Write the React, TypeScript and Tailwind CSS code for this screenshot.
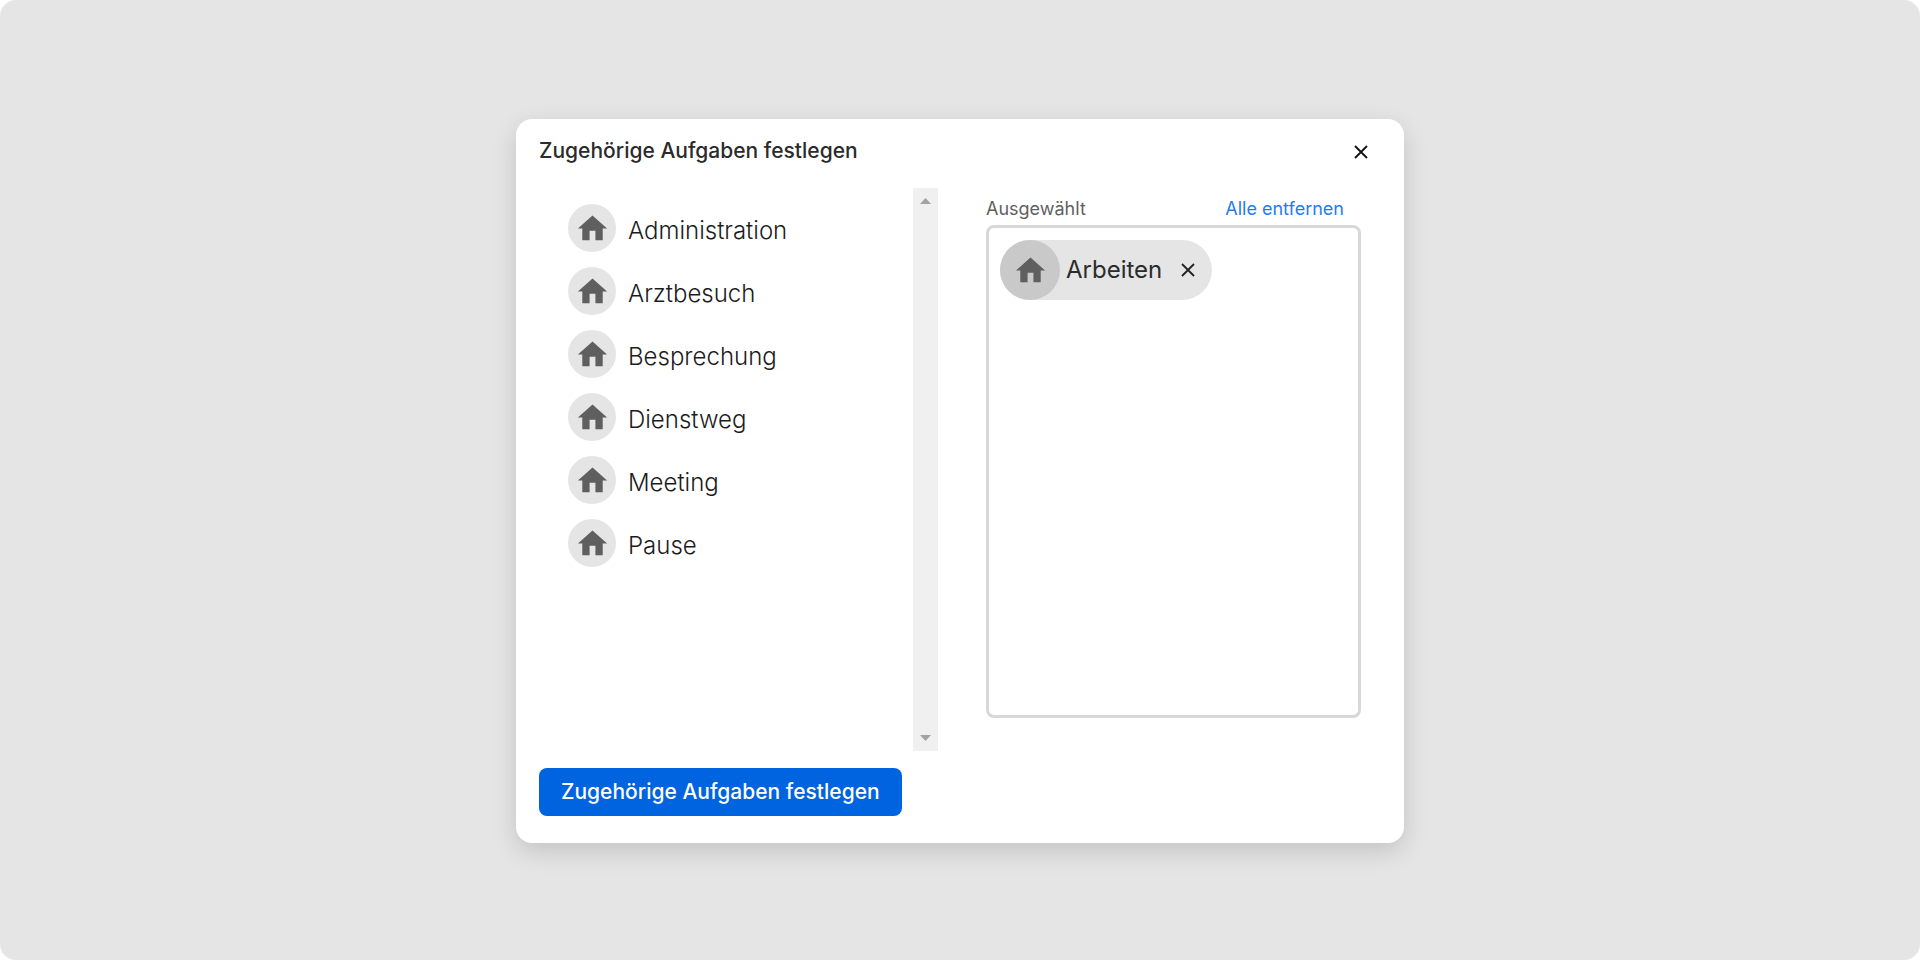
import { useState } from "react";

interface CloseIconProps {
  className?: string;
}

interface TaskItemProps {
  name: string;

  onSelect: (
    name: string
  ) => void;
}

interface TaskChipProps {
  name: string;

  onRemove: (
    name: string
  ) => void;
}

const tasks = [
  "Administration",
  "Arbeiten",
  "Arztbesuch",
  "Besprechung",
  "Dienstweg",
  "Meeting",
  "Pause",
];

const HomeIcon = () => (
  <svg
    viewBox="0 0 24 24"
    className="size-[35px] fill-[#5f5f5f]"
    aria-hidden="true"
  >
    <path d="M10 20v-6.500h4V20h5v-8h3L12 3 2 12h3v8z" />
  </svg>
);

const CloseIcon = ({ className }: CloseIconProps) => (
  <svg
    viewBox="0 0 14 14"
    className={className}
    fill="none"
    stroke="currentColor"
    strokeWidth="1.8"
    aria-hidden="true"
  >
    <path d="M1 1l12 12M13 1L1 13" />
  </svg>
);

const TaskItem = ({
  name,
  onSelect,
}: TaskItemProps) => (
  <li>
    <button
      type="button"
      onClick={() => onSelect(name)}
      className="flex items-center gap-3 text-left"
    >
      <span className="flex size-12 items-center justify-center rounded-full bg-[#e5e5e5]">
        <HomeIcon />
      </span>
      <span className="pt-1.5 text-2xl font-light text-[#1c1c1c]">
        {name}
      </span>
    </button>
  </li>
);

const TaskChip = ({
  name,
  onRemove,
}: TaskChipProps) => (
  <li className="flex items-center rounded-full bg-[#e5e5e5] pr-[15px]">
    <span className="flex size-15 items-center justify-center rounded-full bg-[#c9c9c9]">
      <HomeIcon />
    </span>
    <span className="pl-1.5 text-2xl text-[#2b2b2b]">
      {name}
    </span>
    <button
      type="button"
      aria-label={`${name} entfernen`}
      onClick={() => onRemove(name)}
      className="ml-[17px] p-0.5 text-[#222222]"
    >
      <CloseIcon className="size-3.5" />
    </button>
  </li>
);

// Always visible track, the list is shorter than its pane
const ScrollTrack = () => (
  <div
    className="flex w-[25px] shrink-0 flex-col items-center justify-between bg-[#f0f0f0] py-2.5"
    aria-hidden="true"
  >
    <svg viewBox="0 0 11 6" className="h-1.5 w-[11px] fill-[#a3a3a3]">
      <path d="M0 6L5.500 0 11 6z" />
    </svg>
    <svg viewBox="0 0 11 6" className="h-1.5 w-[11px] fill-[#a3a3a3]">
      <path d="M0 0h11L5.500 6z" />
    </svg>
  </div>
);

const App = () => {
  const [selected, setSelected] = useState<string[]>(["Arbeiten"]);

  const available = tasks.filter(
    (task) => !selected.includes(task)
  );

  const handleSelect = (name: string) => {
    setSelected([...selected, name]);
  };

  const handleRemove = (name: string) => {
    setSelected(
      selected.filter((task) => task !== name)
    );
  };

  return (
    <div className="bg-white font-['Inter',sans-serif]">
      <main className="flex min-h-screen items-start justify-center rounded-2xl bg-[#e5e5e5] px-4 pt-[119px] pb-[117px]">

        <section
          role="dialog"
          aria-labelledby="dialog-title"
          className="w-full max-w-[888px] rounded-2xl bg-white pb-[27px] shadow-[0_8px_24px_rgba(0,0,0,0.15)]"
        >

          <header className="flex h-[69px] items-center justify-between pr-[34px] pb-1 pl-[23px]">
            <h1
              id="dialog-title"
              className="pb-0.5 text-[21px] font-medium text-[#2b2b2b]"
            >
              Zugehörige Aufgaben festlegen
            </h1>
            <button
              type="button"
              aria-label="Schließen"
              className="p-0.5 text-[#111111]"
            >
              <CloseIcon className="size-3.5" />
            </button>
          </header>

          <div className="flex min-h-[563px] pr-[43px]">

            <ul className="flex flex-1 flex-col gap-[15px] pt-4 pl-13">
              {available.map((task) => (
                <TaskItem
                  key={task}
                  name={task}
                  onSelect={handleSelect}
                />
              ))}
            </ul>

            <ScrollTrack />

            <div className="ml-12 flex w-[375px] flex-col pt-2 pb-[33px]">
              <div className="flex h-[29px] items-center justify-between pr-[17px] pb-1 text-lg">
                <h2 className="text-[#5f5f5f]">Ausgewählt</h2>
                <button
                  type="button"
                  onClick={() => setSelected([])}
                  className="text-[#1f7cf2]"
                >
                  Alle entfernen
                </button>
              </div>
              <ul className="flex flex-1 flex-wrap content-start gap-2 rounded-lg border-3 border-[#d8d8d8] px-[11px] py-3">
                {selected.map((task) => (
                  <TaskChip
                    key={task}
                    name={task}
                    onRemove={handleRemove}
                  />
                ))}
              </ul>
            </div>

          </div>

          <footer className="pt-[17px] pl-[23px]">
            <button
              type="button"
              className="h-12 rounded-lg bg-[#0063e0] px-[22px] text-[21px] font-medium text-white"
            >
              Zugehörige Aufgaben festlegen
            </button>
          </footer>

        </section>

      </main>
    </div>
  );
};

export default App;
